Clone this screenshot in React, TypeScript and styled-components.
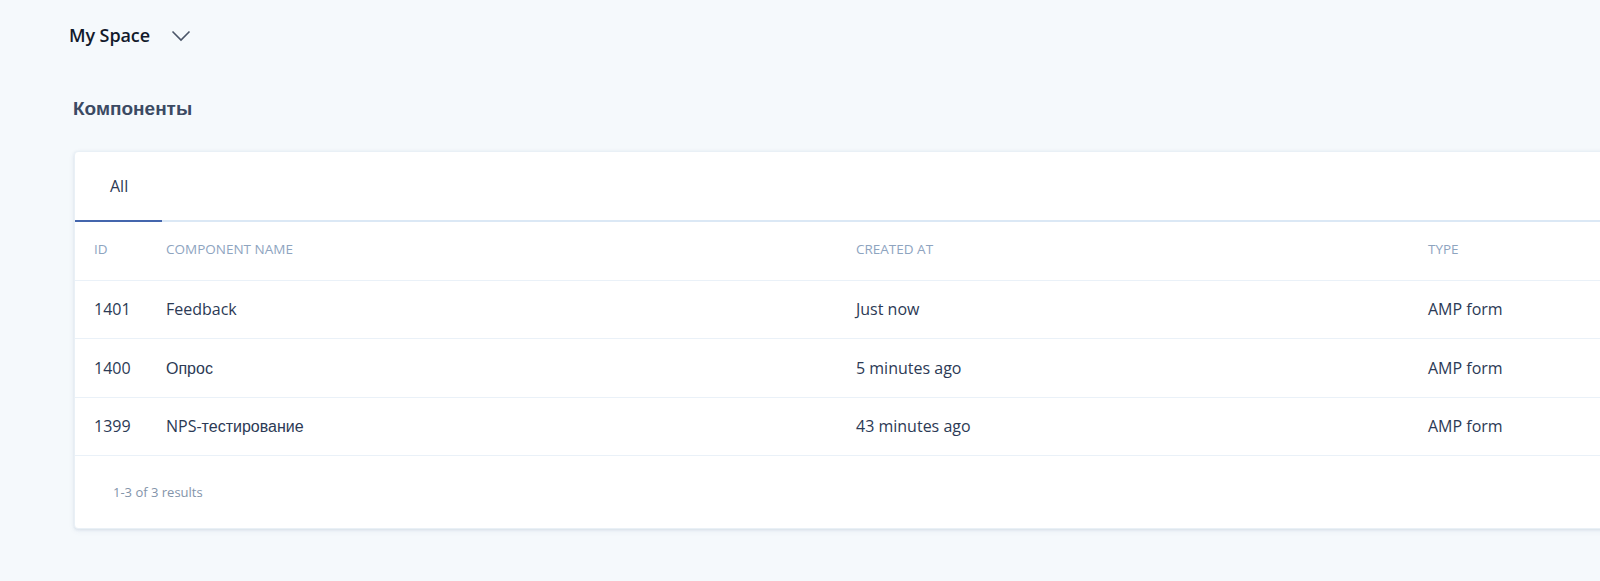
import React from "react";
import styled, { createGlobalStyle } from "styled-components";

const GlobalStyle = createGlobalStyle`
  html, body { margin: 0; padding: 0; }
  body {
    background: #f5f9fc;
    font-family: "Open Sans", "Liberation Sans", Arial, sans-serif;
    overflow: hidden;
    width: 1600px;
    height: 581px;
  }
`;

const Page = styled.div`
  padding: 0 0 0 69px;
  width: 1700px;
`;

const TopBar = styled.div`
  display: flex;
  align-items: center;
  height: 70px;
  gap: 21px;
`;

const SpaceName = styled.span`
  font-size: 18px;
  font-weight: 600;
  color: #121a2b;
  letter-spacing: -0.1px;
`;

const Chevron = styled.svg`
  width: 20px;
  height: 12px;
  margin-top: 2px;
`;

const SectionTitle = styled.h2`
  margin: 27px 0 0 4px;
  font-family: "Liberation Sans", Arial, sans-serif;
  font-size: 19px;
  font-weight: 700;
  color: #3b4a63;
  line-height: 24px;
`;

const Card = styled.div`
  margin: 30px 0 0 5px;
  width: 1580px;
  background: #fff;
  border-radius: 4px;
  box-shadow: 0 1px 3px rgba(60, 90, 130, 0.12), 0 2px 6px rgba(60, 90, 130, 0.06);
  border: 1px solid #e9f0f6;
`;

const Tabs = styled.div`
  display: flex;
  height: 68px;
  border-bottom: 2px solid #dbe8f5;
`;

const Tab = styled.div<{ $active?: boolean }>`
  display: flex;
  align-items: center;
  padding: 0 34px 0 35px;
  font-size: 16px;
  color: #2c3a55;
  margin-bottom: -2px;
  border-bottom: 2px solid ${(p) => (p.$active ? "#4466ad" : "transparent")};
`;

const Row = styled.div<{ $head?: boolean }>`
  display: grid;
  grid-template-columns: 72px 690px 572px 1fr;
  align-items: center;
  height: 57.5px;
  padding-left: 19px;
  box-sizing: content-box;
  border-bottom: 1px solid #eaf1f8;
  font-size: ${(p) => (p.$head ? "13.5px" : "16px")};
  color: ${(p) => (p.$head ? "#8ea4bf" : "#2c3a55")};
  text-transform: ${(p) => (p.$head ? "uppercase" : "none")};
`;

const Cell = styled.div<{ $lift?: boolean }>`
  white-space: nowrap;
  margin-bottom: ${(p) => (p.$lift ? "3px" : "0")};
`;

const Cyr = styled.span`
  font-family: "Liberation Sans", Arial, sans-serif;
`;

const Footer = styled.div`
  height: 72px;
  display: flex;
  align-items: center;
  padding-left: 38px;
  font-size: 13px;
  color: #8394aa;
`;

const rows: { id: string; name: React.ReactNode; created: string; type: string }[] = [
  { id: "1401", name: "Feedback", created: "Just now", type: "AMP form" },
  { id: "1400", name: <Cyr>Опрос</Cyr>, created: "5 minutes ago", type: "AMP form" },
  {
    id: "1399",
    name: (
      <>
        NPS-<Cyr>тестирование</Cyr>
      </>
    ),
    created: "43 minutes ago",
    type: "AMP form",
  },
];

const headers = ["ID", "Component name", "Created at", "Type"];

export default function App() {
  return (
    <>
      <GlobalStyle />
      <Page>
        <TopBar>
          <SpaceName>My Space</SpaceName>
          <Chevron viewBox="0 0 20 12">
            <path d="M1.5 1.5 L10 10 L18.5 1.5" fill="none" stroke="#4a5568" strokeWidth="1.6" />
          </Chevron>
        </TopBar>
        <SectionTitle>Компоненты</SectionTitle>
        <Card>
          <Tabs>
            <Tab $active>All</Tab>
          </Tabs>
          <Row $head>
            {headers.map((h) => (
              <Cell key={h} $lift>
                {h}
              </Cell>
            ))}
          </Row>
          {rows.map((r) => (
            <Row key={r.id}>
              <Cell>{r.id}</Cell>
              <Cell>{r.name}</Cell>
              <Cell>{r.created}</Cell>
              <Cell>{r.type}</Cell>
            </Row>
          ))}
          <Footer>1-3 of 3 results</Footer>
        </Card>
      </Page>
    </>
  );
}
